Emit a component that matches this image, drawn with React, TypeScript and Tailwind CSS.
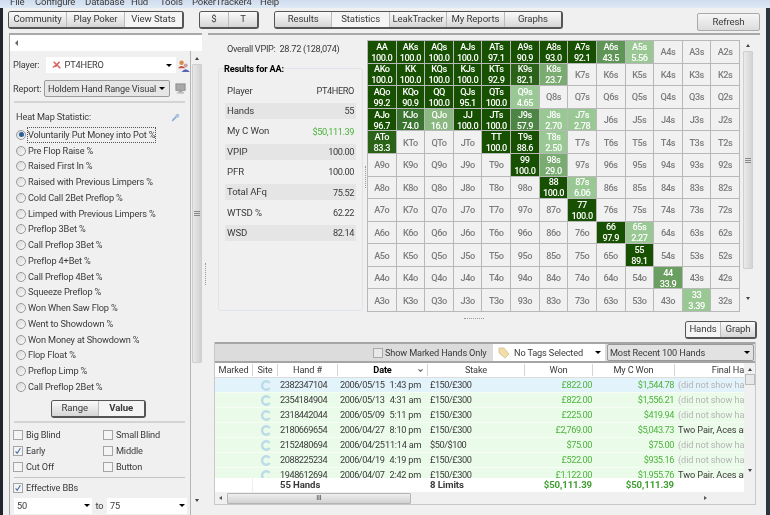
import { ChevronDown } from "lucide-react"

const MENU = [
  ["File", "w-[25px]"],
  ["Configure", "w-[50px]"],
  ["Database", "w-[46px]"],
  ["Hud", "w-[29px]"],
  ["Tools", "w-[32px]"],
  ["PokerTracker4", "w-[68px]"],
  ["Help", "w-[30px]"],
]

const RANKS = ["A", "K", "Q", "J", "T", "9", "8", "7", "6", "5", "4", "3", "2"]

const VALUES: Record<string, string> = {
  AA: "100.0", AKs: "100.0", AQs: "100.0", AJs: "100.0", ATs: "97.1", A9s: "90.9", A8s: "93.0", A7s: "92.1", A6s: "43.5", A5s: "5.56",
  AKo: "100.0", KK: "100.0", KQs: "100.0", KJs: "100.0", KTs: "92.9", K9s: "82.1", K8s: "23.7",
  AQo: "99.2", KQo: "90.9", QQ: "100.0", QJs: "95.1", QTs: "100.0", Q9s: "4.65",
  AJo: "96.7", KJo: "74.0", QJo: "16.0", JJ: "100.0", JTs: "100.0", J9s: "57.9", J8s: "2.70", J7s: "2.78",
  ATo: "83.3", TT: "100.0", T9s: "88.6", T8s: "2.50",
  "99": "100.0", "98s": "29.0",
  "88": "100.0", "87s": "6.06",
  "77": "100.0",
  "66": "97.9", "65s": "2.27",
  "55": "89.1",
  "44": "33.9",
  "33": "3.39",
}

const STATS = [
  "Voluntarily Put Money into Pot %", "Pre Flop Raise %", "Raised First In %", "Raised with Previous Limpers %",
  "Cold Call 2Bet Preflop %", "Limped with Previous Limpers %", "Preflop 3Bet %", "Call Preflop 3Bet %",
  "Preflop 4+Bet %", "Call Preflop 4Bet %", "Squeeze Preflop %", "Won When Saw Flop %", "Went to Showdown %",
  "Won Money at Showdown %", "Flop Float %", "Preflop Limp %", "Call Preflop 2Bet %",
]

const RESULTS = [
  ["Player", "PT4HERO"], ["Hands", "55"], ["My C Won", "$50,111.39"], ["VPIP", "100.00"],
  ["PFR", "100.00"], ["Total AFq", "75.52"], ["WTSD %", "62.22"], ["WSD", "82.14"],
]

const HANDS = [
  ["2382347104", "2006/05/15", "1:43 pm", "£150/£300", "£822.00", "$1,544.78", "(did not show hand)"],
  ["2354184904", "2006/05/13", "4:31 am", "£150/£300", "£822.00", "$1,556.21", "(did not show hand)"],
  ["2318442044", "2006/05/09", "5:11 pm", "£150/£300", "£225.00", "$419.94", "(did not show hand)"],
  ["2180669654", "2006/04/27", "8:10 pm", "£150/£300", "£2,769.00", "$5,043.73", "Two Pair, Aces and"],
  ["2152480694", "2006/04/25", "11:14 am", "$50/$100", "$75.00", "$75.00", "(did not show hand)"],
  ["2088225234", "2006/04/19", "4:19 pm", "£150/£300", "£522.00", "$935.16", "(did not show hand)"],
  ["1948612694", "2006/04/07", "2:42 pm", "£150/£300", "£1,122.00", "$1,955.76", "Two Pair, Aces and"],
]

const TABLE_COLS = "grid grid-cols-[38px_25px_60px_90px_97px_68px_82px_69px]"

function heat(v: number) {
  if (v >= 85) return "bg-[#165000]"
  if (v >= 80) return "bg-[#2a6318]"
  if (v >= 70) return "bg-[#3b7430]"
  if (v >= 50) return "bg-[#4d8644]"
  if (v >= 40) return "bg-[#5f9556]"
  if (v >= 30) return "bg-[#6b9f61]"
  if (v >= 20) return "bg-[#7aab70]"
  if (v >= 10) return "bg-[#8ab880]"
  return "bg-[#9ac895]"
}

function Segments({ items, light, className }: { items: string[]; light?: string; className: string }) {
  return (
    <div className={`flex h-[18px] overflow-hidden rounded-[3px] border border-r-2 border-b-2 border-[#555] text-[9.6px] tracking-[-0.1px] ${className}`}>
      {items.map((item) => (
        <div
          key={item}
          className={`flex flex-1 items-center justify-center border-r border-[#bbb] last:border-r-0 ${
            item === light ? "bg-[#f4f4f4]" : "bg-gradient-to-b from-[#fafafa] to-[#d6d6d6]"
          }`}
        >
          {item}
        </div>
      ))}
    </div>
  )
}

function Radio({ on }: { on?: boolean }) {
  return (
    <span className="flex h-[10px] w-[10px] shrink-0 items-center justify-center rounded-full border border-[#999] bg-gradient-to-br from-[#d8d8d8] to-[#fafafa]">
      {on && <span className="h-[5px] w-[5px] rounded-full bg-[#2a5f9a]" />}
    </span>
  )
}

function Check({ label, on }: { label: string; on?: boolean }) {
  return (
    <div className="flex h-[16px] items-center gap-[3px]">
      <span className="flex h-[10px] w-[10px] items-center justify-center border border-[#a5a5a5] bg-[#f4f4f4]">
        {on && (
          <svg viewBox="0 0 10 10" className="h-[10px] w-[10px]">
            <path d="M2 5.5 L4 8 L8 1.5" fill="none" stroke="#4a6fa8" strokeWidth="1.4" />
          </svg>
        )}
      </span>
      {label}
    </div>
  )
}

function Arrow({ className = "" }: { className?: string }) {
  return <span className={`h-0 w-0 border-x-[3px] border-t-[3px] border-x-transparent border-t-black ${className}`} />
}

function ScrollArrow({ up }: { up?: boolean }) {
  return (
    <span
      className={`h-0 w-0 border-x-[2.5px] border-x-transparent ${
        up ? "border-b-[3px] border-b-[#444]" : "border-t-[3px] border-t-[#444]"
      }`}
    />
  )
}

function Grip() {
  return (
    <span className="flex flex-col gap-px">
      <span className="h-px w-[6px] bg-[#888]" />
      <span className="h-px w-[6px] bg-[#888]" />
      <span className="h-px w-[6px] bg-[#888]" />
    </span>
  )
}

function SiteIcon() {
  return (
    <svg viewBox="0 0 12 12" className="h-[11px] w-[11px]">
      <path d="M10.5 3.2 A4.6 4.6 0 1 0 10.5 8.8" fill="none" stroke="#bcdbe8" strokeWidth="2.6" />
    </svg>
  )
}

function Heatmap() {
  return (
    <div className="grid h-[272px] w-[373px] grid-cols-[repeat(13,minmax(0,1fr))] grid-rows-[repeat(12,minmax(0,1fr))] gap-px border border-[#b8b8b8] bg-[#b8b8b8] text-[9.2px] font-medium leading-[11px] tracking-[-0.45px]">
      {RANKS.slice(0, 12).map((row, r) =>
        RANKS.map((col, c) => {
          const name = r === c ? row + col : r < c ? row + col + "s" : col + row + "o"
          const value = VALUES[name]
          if (!value) {
            return (
              <div key={name} className="flex items-center justify-center bg-[#f1f1f1] text-[#7c7c7c]">
                {name}
              </div>
            )
          }
          return (
            <div key={name} className={`flex flex-col items-center justify-center text-white ${heat(parseFloat(value))}`}>
              <span>{name}</span>
              <span>{value}</span>
            </div>
          )
        })
      )}
    </div>
  )
}

export default function App() {
  return (
    <div
      className="relative flex h-[515px] w-[770px] flex-col overflow-hidden whitespace-nowrap bg-[#f0f0f0] text-[9.2px] tracking-[-0.15px] text-[#3a3a3a] blur-[0.35px]"
      style={{ fontFamily: 'Roboto, sans-serif' }}
    >
      <div className="flex h-[8px] items-end overflow-hidden bg-gradient-to-b from-[#cfdcee] to-[#dfe9f6] pl-[10px] text-[9.6px] leading-[14px]">
        {MENU.map(([m, w]) => (
          <span key={m} className={`-mb-[1px] shrink-0 ${w}`}>{m}</span>
        ))}
      </div>

      <div className="flex h-[25px] items-start pt-[3px] pl-[8px]">
        <Segments items={["Community", "Play Poker", "View Stats"]} light="View Stats" className="w-[176px]" />
        <Segments items={["$", "T"]} className="ml-[15px] w-[60px]" />
        <Segments
          items={["Results", "Statistics", "LeakTracker", "My Reports", "Graphs"]}
          light="Statistics"
          className="ml-[15px] w-[289px]"
        />
        <button className="mt-[2px] ml-[134px] h-[18px] w-[63px] rounded-[2px] border border-[#aaa] bg-gradient-to-b from-[#f6f6f6] to-[#dcdcdc] text-[9.6px]">
          Refresh
        </button>
      </div>

      <div className="flex min-h-0 flex-1 pl-[9px]">
        {/* left filter panel */}
        <div className="flex w-[193px] flex-col border-t-2 border-l border-[#a8a8a8]">
          <div className="flex h-[16px] items-center bg-white pl-[5px]">
            <span className="h-0 w-0 border-y-[3px] border-r-[3px] border-y-transparent border-r-[#666]" />
          </div>
          <div className="flex min-h-0 flex-1">
            <div className="w-[181px] border-r border-[#b5b5b5] pl-[3px]">
              <div className="mt-[6px] flex h-[16px] items-center">
                <span className="w-[33px]">Player:</span>
                <div className="flex h-[16px] w-[132px] items-center bg-white pl-[6px]">
                  <svg viewBox="0 0 12 12" className="mr-[3px] h-[10px] w-[10px]">
                    <path d="M2 2 L10 10 M9 2 L4 8 M1 9 L5 6" stroke="#d9605a" strokeWidth="1.8" fill="none" />
                  </svg>
                  <span>PT4HERO</span>
                  <Arrow className="mr-[4px] ml-auto" />
                </div>
                <svg viewBox="0 0 14 14" className="ml-[1px] h-[13px] w-[13px]">
                  <circle cx="5" cy="4" r="2.4" fill="#d98a4a" />
                  <path d="M1 10 Q5 5 9 10 Z" fill="#c8503c" />
                  <circle cx="9.5" cy="7" r="2.2" fill="#c9a0a8" />
                  <path d="M5 14 Q9.5 8 14 14 Z" fill="#5a62b8" />
                </svg>
              </div>
              <div className="mt-[7px] flex h-[17px] items-center">
                <span className="w-[31px]">Report:</span>
                <div className="flex h-[17px] w-[126px] items-center rounded-[2px] border border-[#999] bg-[#e6e6e6] pl-[3px]">
                  <span>Holdem Hand Range Visual</span>
                  <Arrow className="mr-[4px] ml-auto" />
                </div>
                <svg viewBox="0 0 12 12" className="ml-[5px] h-[11px] w-[11px]">
                  <rect x="1" y="1" width="10" height="7" fill="#a9a9a9" stroke="#8a8a8a" />
                  <rect x="4" y="8" width="4" height="2" fill="#a0a0a0" />
                  <rect x="2" y="10" width="8" height="1.5" fill="#b5b5b5" />
                </svg>
              </div>
              <div className="mt-[4px] mr-[5px] ml-[1px] h-[2px] bg-[#d4d4d4]" />
              <div className="mt-[6px] flex h-[16px] items-center pl-[3px]">
                <span>Heat Map Statistic:</span>
                <svg viewBox="0 0 12 12" className="mr-[10px] ml-auto h-[9px] w-[9px]">
                  <path d="M1.5 10.5 L7 5" stroke="#8fb0d6" strokeWidth="2.4" />
                  <circle cx="8.5" cy="3.5" r="2.6" fill="#a9c3e0" />
                </svg>
              </div>
              <div className="mt-[2px] pl-[3px]">
                {STATS.map((s, i) => (
                  <div key={s} className="flex h-[15.75px] items-center gap-[2px]">
                    <Radio on={i === 0} />
                    <span className={i === 0 ? "outline-1 outline-dotted outline-[#555]" : ""}>{s}</span>
                  </div>
                ))}
              </div>
              <div className="mt-[5px] flex justify-center pr-[6px]">
                <Segments items={["Range", "Value"]} light="Value" className="w-[95px] [&>*:last-child]:font-bold" />
              </div>
              <div className="mt-[3px] mr-[5px] ml-[1px] h-[2px] bg-[#d4d4d4]" />
              <div className="mt-[4px] grid grid-cols-[90px_1fr]">
                <Check label="Big Blind" />
                <Check label="Small Blind" />
                <Check label="Early" on />
                <Check label="Middle" />
                <Check label="Cut Off" />
                <Check label="Button" />
              </div>
              <div className="mt-[2px] mr-[5px] ml-[1px] h-px bg-[#c4c4c4]" />
              <div className="mt-[2px]">
                <Check label="Effective BBs" on />
              </div>
              <div className="mt-[2px] ml-[1px] flex items-center">
                <div className="flex h-[16px] w-[78px] items-center bg-white pl-[3px]">
                  50
                  <Arrow className="mr-[2px] ml-auto" />
                </div>
                <span className="w-[15px] text-center">to</span>
                <div className="flex h-[16px] w-[80px] items-center bg-white pl-[3px]">
                  75
                  <Arrow className="mr-[2px] ml-auto" />
                </div>
              </div>
            </div>
            <div className="flex w-[11px] flex-col items-center bg-[#f0f0f0] pt-[6px]">
              <ScrollArrow up />
              <div className="mt-[4px] flex h-[300px] w-[10px] items-center justify-center rounded-[1px] border border-[#cfcfcf] bg-gradient-to-r from-[#e8e8e8] to-[#d2d2d2]">
                <Grip />
              </div>
              <div className="mt-[138px]">
                <ScrollArrow />
              </div>
            </div>
          </div>
        </div>

        {/* splitter */}
        <div className="flex w-[6px] flex-col items-center justify-start pt-[230px]">
          <div className="h-[22px] w-px border-l border-dotted border-[#999]" />
        </div>

        {/* right side */}
        <div className="flex w-[552px] flex-col border-t-2 border-[#a8a8a8]">
          <div className="flex h-[282px]">
            <div className="w-[155px] pt-[7px] pl-[10px]">
              <div className="h-[14px] pl-[9px] leading-[14px] tracking-[-0.3px]">Overall VPIP:&nbsp; 28.72 (128,074)</div>
              <div className="mt-[12px] h-[243px] w-[145px] rounded-[3px] border border-[#dfe5ea]">
                <div className="-mt-[7px] h-[14px] pl-[5px] leading-[14px] font-bold text-black">Results for AA:</div>
                <div className="mt-[7px] flex flex-col gap-[4.3px] px-[6px]">
                  {RESULTS.map(([k, v], i) => (
                    <div
                      key={k}
                      className={`flex h-[16px] items-center justify-between px-[2px] ${i % 2 === 1 ? "bg-[#e5e5e5]" : ""}`}
                    >
                      <span className="text-[9.6px] tracking-[-0.1px]">{k}</span>
                      <span className={`tracking-[-0.4px] ${k === "My C Won" ? "text-[#4db33d]" : ""}`}>{v}</span>
                    </div>
                  ))}
                </div>
              </div>
            </div>
            <div className="flex w-[4px] justify-center pt-[131px]">
              <div className="h-[22px] border-l border-dotted border-[#999]" />
            </div>
            <div className="pt-[5px]">
              <Heatmap />
            </div>
            <div className="mt-[5px] ml-[2px] flex w-[11px] flex-col items-center pt-[4px]">
              <ScrollArrow up />
              <div className="mt-[4px] flex h-[218px] w-[10px] items-center justify-center rounded-[1px] border border-[#cfcfcf] bg-gradient-to-r from-[#eaeaea] to-[#d4d4d4]">
                <Grip />
              </div>
              <div className="mt-[30px]">
                <ScrollArrow />
              </div>
            </div>
          </div>

          <div className="flex h-[4px] justify-center pr-[20px]">
            <div className="mt-[1px] h-px w-[20px] border-t border-dotted border-[#999]" />
          </div>

          <div className="flex justify-end pr-[3px]">
            <Segments items={["Hands", "Graph"]} light="Hands" className="w-[72px]" />
          </div>

          <div className="mt-[3px] ml-[6px] flex w-[542px] flex-col border border-t-0 border-[#c8c8c8]">
            <div className="flex h-[21px] items-center border-y-2 border-[#a5a5a5] bg-[#dcdcdc] pl-[158px]">
              <span className="mr-[2px] h-[10px] w-[10px] border border-[#aaa] bg-[#e8e8e8]" />
              <span className="w-[107px]">Show Marked Hands Only</span>
              <div className="ml-[1px] flex h-[17px] w-[112px] items-center bg-white pl-[5px]">
                <svg viewBox="0 0 12 12" className="mr-[4px] h-[12px] w-[12px]">
                  <path d="M1 1 L6 1 L11 7 L7 11 L1 6 Z" fill="#f3dca6" stroke="#cdb98a" strokeWidth="0.7" />
                </svg>
                No Tags Selected
                <Arrow className="mr-[4px] ml-auto" />
              </div>
              <div className="ml-[2px] flex h-[17px] w-[147px] items-center rounded-[2px] border border-[#999] bg-[#e2e2e2] pl-[2px]">
                Most Recent 100 Hands
                <Arrow className="mr-[3px] ml-auto" />
              </div>
            </div>
            <div className="flex">
              <div className="w-[529px] shrink-0">
                <div className={`${TABLE_COLS} h-[15px] items-center border-b border-[#ddd] bg-white`}>
                  {["Marked", "Site", "Hand #", "Date", "Stake", "Won", "My C Won", "Final Ha"].map((h) => (
                    <div
                      key={h}
                      className={`relative flex h-[12px] items-center justify-center overflow-hidden border-r border-[#d4d4d4] last:justify-end last:border-r-0 ${
                        h === "Date" ? "font-bold text-black" : ""
                      }`}
                    >
                      {h}
                      {h === "Date" && <ChevronDown className="absolute right-[3px] h-[7px] w-[7px] text-[#666]" strokeWidth={4} />}
                    </div>
                  ))}
                </div>
                <div className="h-[100px] overflow-hidden">
                  {HANDS.map((h, i) => (
                    <div
                      key={h[0]}
                      className={`${TABLE_COLS} h-[15px] items-center border-b border-[#f6fdf5] tracking-[-0.45px] ${
                        i === 0 ? "bg-[#e3f3fb]" : "bg-[#ebfbe9]"
                      }`}
                    >
                      <span />
                      <span className="flex justify-center"><SiteIcon /></span>
                      <span className="pl-[2px]">{h[0]}</span>
                      <span className="flex pl-[2px]">
                        <span className="w-[45px]">{h[1]}</span>
                        <span className="w-[36px] text-right tracking-[-0.25px]">{h[2]}</span>
                      </span>
                      <span className="pl-[2px]">{h[3]}</span>
                      <span className="pr-[1px] text-right text-[#4db33d]">{h[4]}</span>
                      <span className="pr-[1px] text-right text-[#4db33d]">{h[5]}</span>
                      <span className={`overflow-hidden pl-[3px] tracking-[-0.1px] ${h[6].startsWith("(") ? "text-[#b5b5b5]" : ""}`}>
                        {h[6]}
                      </span>
                    </div>
                  ))}
                </div>
                <div className={`${TABLE_COLS} h-[14px] items-center bg-white text-[9.6px] font-bold tracking-[-0.1px]`}>
                  <span className="h-full border-r border-[#eee]" />
                  <span />
                  <span className="pl-[2px]">55 Hands</span>
                  <span />
                  <span className="pl-[2px]">8 Limits</span>
                  <span className="pr-[1px] text-right text-[#3f9e30]">$50,111.39</span>
                  <span className="pr-[1px] text-right text-[#3f9e30]">$50,111.39</span>
                  <span />
                </div>
              </div>
              <div className="flex flex-1 flex-col items-center bg-[#f0f0f0] pt-[5px]">
                <ScrollArrow up />
                <div className="mt-[3px] h-[11px] w-[10px] border border-[#bbb] bg-[#e8e8e8]" />
                <div className="mt-[86px]">
                  <ScrollArrow />
                </div>
              </div>
            </div>
            <div className="flex h-[12px] items-center bg-[#f0f0f0] pl-[4px]">
              <span className="h-0 w-0 border-y-[2.5px] border-r-[3px] border-y-transparent border-r-[#555]" />
              <div className="ml-[5px] flex h-[11px] w-[184px] items-center justify-center rounded-[1px] border border-[#b5b5b5] bg-gradient-to-b from-[#eee] to-[#d2d2d2]">
                <span className="text-[7px] leading-none">III</span>
              </div>
              <span className="ml-[293px] h-0 w-0 border-y-[2.5px] border-l-[3px] border-y-transparent border-l-[#555]" />
            </div>
          </div>
        </div>
      </div>

      {/* window frame edges */}
      <div className="absolute top-[8px] bottom-0 left-0 w-[3px] bg-[#20262c]" />
      <div className="absolute top-[8px] right-0 bottom-0 w-[4px] bg-[#2d343b]" />
    </div>
  )
}
